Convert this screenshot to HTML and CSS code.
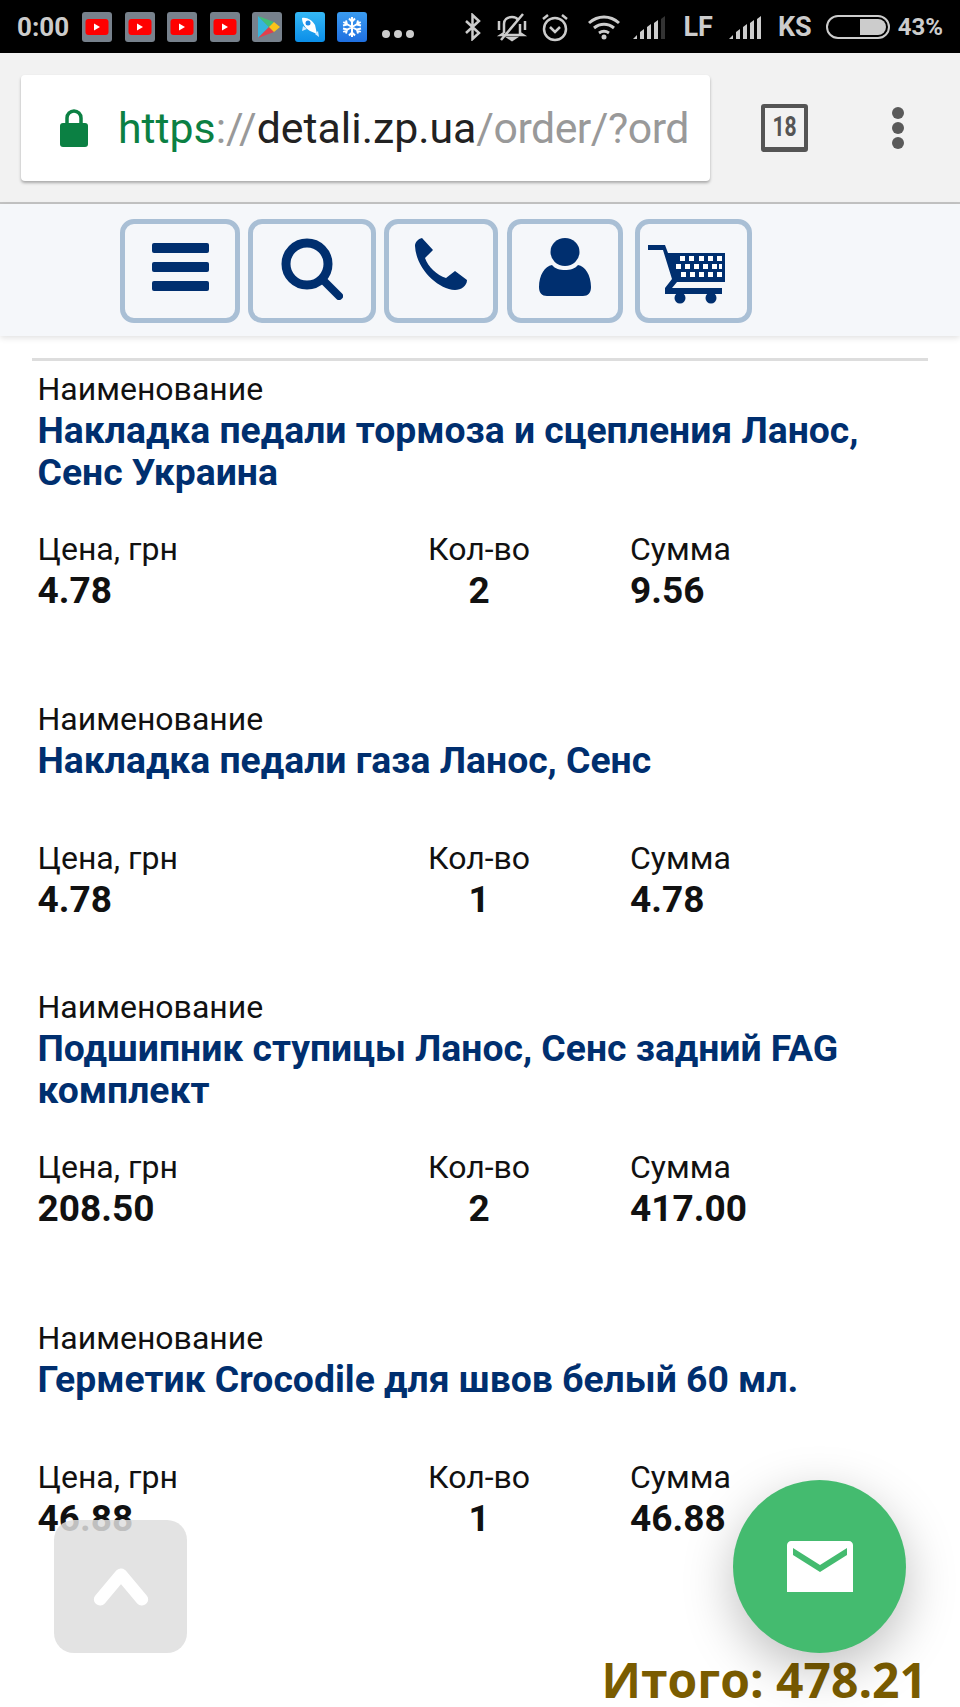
FILE: index.html
```html
<!DOCTYPE html>
<html lang="ru">
<head>
    <meta charset="UTF-8">
    <meta name="viewport" content="width=device-width, initial-scale=1.0">
    <title>detali.zp.ua</title>
    <link rel="stylesheet" href="styles.css">
</head>
<body>
    <!-- Android status bar -->
    <div class="status-bar">
        <div class="status-left">
            <span class="clock">0:00</span>
            <span class="tile"><svg viewBox="0 0 30 30" class="tile-svg"><rect x="3.500" y="7" width="23" height="16" rx="3" fill="#f00"/><path d="M12 11.500v7l6-3.500z" fill="#fff"/></svg></span>
            <span class="tile"><svg viewBox="0 0 30 30" class="tile-svg"><rect x="3.500" y="7" width="23" height="16" rx="3" fill="#f00"/><path d="M12 11.500v7l6-3.500z" fill="#fff"/></svg></span>
            <span class="tile"><svg viewBox="0 0 30 30" class="tile-svg"><rect x="3.500" y="7" width="23" height="16" rx="3" fill="#f00"/><path d="M12 11.500v7l6-3.500z" fill="#fff"/></svg></span>
            <span class="tile"><svg viewBox="0 0 30 30" class="tile-svg"><rect x="3.500" y="7" width="23" height="16" rx="3" fill="#f00"/><path d="M12 11.500v7l6-3.500z" fill="#fff"/></svg></span>
            <span class="tile"><svg viewBox="0 0 30 30" class="tile-svg"><path d="M6 4v22l11-11z" fill="#35b5dc"/><path d="M6 4l11 11 5-5z" fill="#3fc07a"/><path d="M6 26l11-11 5 5z" fill="#e2404c"/><path d="M17 15l5-5 6 5-6 5z" fill="#fcc419"/></svg></span>
            <span class="tile tile-rocket"><svg viewBox="0 0 30 30" class="tile-svg"><path d="M7 6c5-1 10 2 13 7l2 9-7-3C10 16 7 11 7 6z" fill="#fff"/><circle cx="13" cy="11" r="2.500" fill="#1e88e5"/><path d="M20 22l4 3-1-6zM8 14l-1 5 5-2z" fill="#cfeaff"/></svg></span>
            <span class="tile tile-snow"><svg viewBox="0 0 30 30" class="tile-svg" fill="none" stroke="#fff" stroke-width="2"><path d="M15 5v20M6.300 10l17.400 10M6.300 20l17.400-10M12 6.500l3 3 3-3M12 23.500l3-3 3 3M6 13.500l4 -1-1-4M24 16.500l-4 1 1 4M6 16.500l4 1-1 4M24 13.500l-4-1 1-4"/></svg></span>
            <span class="more-dots"><i></i><i></i><i></i></span>
        </div>
        <div class="status-right">
            <svg class="st-bt" viewBox="0 0 18 28" fill="none" stroke="#ccc" stroke-width="2.500"><path d="M2 8l13 12-6.500 6V2L15 8 2 20"/></svg>
            <svg class="st-bell" viewBox="0 0 32 30" fill="none" stroke="#ccc" stroke-width="2.500"><path d="M8 21v-9c0-4 3-7 8-7 3 0 5 1 6 3M24 12v9l3 2H5l3-2M13 26h6l-3 2zM3 9v9M29 9v9M5 28L27 2"/></svg>
            <svg class="st-alarm" viewBox="0 0 28 30" fill="none" stroke="#ccc" stroke-width="2.500"><circle cx="14" cy="17" r="11"/><path d="M9 15l5 5 5-5M2 7l5-4M26 7l-5-4"/></svg>
            <svg class="st-wifi" viewBox="0 0 34 26" fill="none" stroke="#ccc" stroke-width="3"><path d="M2 9c9-8 21-8 30 0M7 14c6-5 14-5 20 0M12 19c3-2 7-2 10 0"/><circle cx="17" cy="23" r="2.500" fill="#ccc" stroke="none"/></svg>
            <svg class="st-signal" viewBox="0 0 34 24"><path d="M0 24l4-4v4zM7 24v-7l4-3v10zM14 24V12l4-3v15zM21 24V8l4-3v19z" fill="#ccc"/><path d="M28 24V4l4-3v23z" fill="#333"/></svg>
            <span class="st-text st-lf">LF</span>
            <svg class="st-signal" viewBox="0 0 34 24"><path d="M0 24l4-4v4zM7 24v-7l4-3v10zM14 24V12l4-3v15zM21 24V8l4-3v19zM28 24V4l4-3v23z" fill="#ccc"/></svg>
            <span class="st-text st-ks">KS</span>
            <span class="battery"><span class="battery-fill"></span></span>
            <span class="st-pct">43%</span>
        </div>
    </div>

    <!-- Browser toolbar -->
    <div class="toolbar">
        <div class="url-box">
            <svg class="lock" viewBox="0 0 28 38"><path d="M7 16V9a7 7 0 0 1 14 0v7" fill="none" stroke="#0b8043" stroke-width="3.500"/><rect y="14" width="28" height="24" rx="3" fill="#0b8043"/></svg>
            <div class="url"><span class="url-https">https</span><span class="url-dim">://</span><span class="url-host">detali.zp.ua</span><span class="url-path">/order/?ord</span></div>
        </div>
        <div class="tab-count"><span class="tab-num">18</span></div>
        <div class="menu-dots"><i></i><i></i><i></i></div>
    </div>

    <!-- Site nav -->
    <div class="site-nav">
        <a class="nav-btn nav-menu"><span class="burger"><i></i><i></i><i></i></span></a>
        <a class="nav-btn nav-search">
            <svg viewBox="0 0 62 62" class="icon-search" fill="none" stroke="#002f6f"><circle cx="26" cy="26" r="21" stroke-width="9"/><path d="M42 42l16 16" stroke-width="8" stroke-linecap="round"/></svg>
        </a>
        <a class="nav-btn nav-phone">
            <svg viewBox="0 0 52 52" class="icon-phone"><path d="M7 0L18 12L10 20C13 29 22 37 31 40L40 33L52 42C52 48 46 52 40 52C22 51 1 30 0 8C0 4 3 1 7 0z" fill="#002f6f"/></svg>
        </a>
        <a class="nav-btn nav-user">
            <svg viewBox="0 0 52 58" class="icon-user"><ellipse cx="26" cy="14" rx="14.500" ry="14" fill="#002f6f"/><path d="M13 27c3 4 8 5 13 5s10-1 13-5c7 1 13 10 13 22 0 6-3 9-8 9H8c-5 0-8-3-8-9 0-12 6-21 13-22z" fill="#002f6f"/></svg>
        </a>
        <a class="nav-btn nav-cart">
            <svg viewBox="0 0 77 59" class="icon-cart"><path d="M0 0h17l3 8h57v29H29l-5 6h50v6H17v-6l7-9L15 5H0z" fill="#002f6f"/><circle cx="32" cy="53" r="5.500" fill="#002f6f"/><circle cx="63" cy="53" r="5.500" fill="#002f6f"/><path d="M32 11h5v5h-5zM41 11h5v5h-5zM51 11h5v5h-5zM60 11h5v5h-5zM69 11h5v5h-5zM28 19h5v5h-5zM37 19h5v5h-5zM46 19h5v5h-5zM55 19h5v5h-5zM64 19h5v5h-5zM71 19h3v5h-3zM33 27h5v5h-5zM42 27h5v5h-5zM51 27h5v5h-5zM60 27h5v5h-5zM69 27h5v5h-5z" fill="#fff"/></svg>
        </a>
    </div>

    <div class="content">
        <div class="item item-long">
            <div class="cap">Наименование</div>
            <div class="name">Накладка педали тормоза и сцепления Ланос, Сенс Украина</div>
            <div class="nums">
                <div><div class="cap">Цена, грн</div><div class="val">4.78</div></div>
                <div class="qty"><div class="cap">Кол-во</div><div class="val">2</div></div>
                <div><div class="cap">Сумма</div><div class="val">9.56</div></div>
            </div>
        </div>
        <div class="item item-short">
            <div class="cap">Наименование</div>
            <div class="name">Накладка педали газа Ланос, Сенс</div>
            <div class="nums">
                <div><div class="cap">Цена, грн</div><div class="val">4.78</div></div>
                <div class="qty"><div class="cap">Кол-во</div><div class="val">1</div></div>
                <div><div class="cap">Сумма</div><div class="val">4.78</div></div>
            </div>
        </div>
        <div class="item item-long item-third">
            <div class="cap">Наименование</div>
            <div class="name">Подшипник ступицы Ланос, Сенс задний FAG комплект</div>
            <div class="nums">
                <div><div class="cap">Цена, грн</div><div class="val">208.50</div></div>
                <div class="qty"><div class="cap">Кол-во</div><div class="val">2</div></div>
                <div><div class="cap">Сумма</div><div class="val">417.00</div></div>
            </div>
        </div>
        <div class="item item-short">
            <div class="cap">Наименование</div>
            <div class="name">Герметик Crocodile для швов белый 60 мл.</div>
            <div class="nums">
                <div><div class="cap">Цена, грн</div><div class="val">46.88</div></div>
                <div class="qty"><div class="cap">Кол-во</div><div class="val">1</div></div>
                <div><div class="cap">Сумма</div><div class="val">46.88</div></div>
            </div>
        </div>
        <div class="total">Итого: 478.21</div>
    </div>

    <a class="to-top">
        <svg viewBox="0 0 60 42" class="icon-up" fill="none" stroke="#fff" stroke-width="13" stroke-linecap="round" stroke-linejoin="round"><path d="M8 34L30 8l22 26"/></svg>
    </a>
    <a class="mail-fab">
        <svg viewBox="0 0 66 51" class="icon-mail"><path d="M4 0h58c2 0 4 2 4 4v47H0V4c0-2 2-4 4-4z" fill="#fff"/><path d="M6 7l27 17L60 7v7L33 31 6 14z" fill="#44bb6f"/></svg>
    </a>
</body>
</html>
```

FILE: styles.css
```css
html, body {
    margin: 0;
    padding: 0;
    height: 1707px;
    overflow: hidden;
}
body {
    position: relative;
    font-family: Roboto, sans-serif;
    background-color: #fff;
    color: #111;
}

/* status bar */
.status-bar {
    height: 53px;
    background-color: #000;
    display: flex;
    justify-content: space-between;
    align-items: center;
    padding: 0 17px;
}
.status-left, .status-right {
    display: flex;
    align-items: center;
}
.clock {
    width: 65px;
    font-size: 26px;
    font-weight: 700;
    color: #ccc;
}
.tile {
    width: 30px;
    height: 30px;
    margin-right: 12.500px;
    border-radius: 3px;
    background-color: #77818c;
}
.tile-rocket {
    background: linear-gradient(#35b8f5, #0b8ee8);
}
.tile-snow {
    background: linear-gradient(#3a9bf0, #1f6fe0);
}
.tile-svg {
    display: block;
    width: 30px;
    height: 30px;
}
.more-dots {
    display: flex;
    gap: 4px;
    margin: 14px 0 0 2px;
}
.more-dots i {
    width: 8px;
    height: 8px;
    border-radius: 50%;
    background-color: #ccc;
}
.st-bt { width: 18px; height: 28px; margin-right: 14px; }
.st-bell { width: 32px; height: 30px; margin-right: 13px; }
.st-alarm { width: 28px; height: 30px; margin-right: 18px; }
.st-wifi { width: 34px; height: 26px; margin-right: 12px; }
.st-signal { width: 34px; height: 24px; }
.st-text {
    font-size: 27px;
    font-weight: 700;
    color: #ccc;
}
.st-pct {
    font-size: 24px;
    font-weight: 700;
    color: #ccc;
}
.st-lf { margin: 0 16px 0 16px; }
.st-ks { margin: 0 14px 0 15px; }
.battery {
    box-sizing: border-box;
    width: 64px;
    height: 24px;
    border: 2px solid #ccc;
    border-radius: 12px;
    padding: 2px;
    display: flex;
    justify-content: flex-end;
    margin-right: 8px;
}
.battery-fill {
    width: 26px;
    background-color: #ccc;
    border-radius: 0 9px 9px 0;
}

/* browser toolbar */
.toolbar {
    box-sizing: border-box;
    height: 151px;
    padding: 22px 0 0 21px;
    background-color: #f2f2f2;
    border-bottom: 2px solid #c4c4c4;
    display: flex;
    align-items: flex-start;
}
.url-box {
    box-sizing: border-box;
    width: 689px;
    height: 106px;
    background-color: #fff;
    border-radius: 4px;
    box-shadow: 0 2px 3px rgba(0, 0, 0, 0.3);
    display: flex;
    align-items: center;
    padding: 0 20px 0 39px;
}
.lock {
    width: 28px;
    height: 38px;
    flex-shrink: 0;
    margin-right: 30px;
}
.url {
    min-width: 0;
    font-size: 42.800px;
    white-space: nowrap;
    font-weight: 400;
    color: #999;
}
.url-https { color: #0b8043; }
.url-host { color: #222; }
.url-path { letter-spacing: -0.500px; }
.tab-count {
    box-sizing: border-box;
    width: 47px;
    height: 48px;
    margin: 29px 0 0 51px;
    border: 4px solid #555;
    border-radius: 3px;
    border-bottom-width: 5px;
    text-align: center;
    line-height: 38px;
}
.tab-num {
    display: inline-block;
    transform: scaleX(0.78);
    font-size: 27px;
    font-weight: 700;
    color: #555;
}
.menu-dots {
    display: flex;
    flex-direction: column;
    gap: 3px;
    margin: 32px 0 0 84px;
}
.menu-dots i {
    width: 12px;
    height: 12px;
    border-radius: 50%;
    background-color: #5a5a5a;
}

/* site nav */
.site-nav {
    box-sizing: border-box;
    height: 132px;
    padding: 15px 0 0 120px;
    background-color: #f5f7fa;
    box-shadow: 0 2px 6px rgba(0, 0, 0, 0.12);
    display: flex;
    gap: 8px;
}
.nav-btn {
    box-sizing: border-box;
    height: 104px;
    border: 5px solid #a9bfd5;
    border-radius: 14px;
    display: flex;
    align-items: center;
    justify-content: center;
}
.nav-menu { width: 120px; }
.nav-search { width: 128px; }
.nav-phone { width: 114px; }
.nav-user { width: 116px; margin-left: 1px; }
.nav-cart { width: 117px; margin-left: 4px; }
.burger {
    display: flex;
    flex-direction: column;
    gap: 9px;
    margin-bottom: 8px;
}
.burger i {
    width: 57px;
    height: 10px;
    border-radius: 2px;
    background-color: #002f6f;
}
.icon-search { width: 62px; height: 62px; margin-bottom: 4px; }
.icon-phone { width: 52px; height: 52px; margin-bottom: 14px; }
.icon-user { width: 52px; height: 58px; margin-bottom: 9px; }
.icon-cart { width: 77px; height: 59px; margin: 6px 15px 0 0; }

/* order list */
.content {
    margin: 22px 32px 0;
    padding: 8px 6px 0 5.500px;
    border-top: 3px solid #ddd;
}
.cap {
    font-size: 32px;
    line-height: 40px;
    font-weight: 400;
    color: #111;
}
.name {
    font-size: 37.300px;
    line-height: 42px;
    font-weight: 700;
    color: #002f6f;
}
.nums {
    display: grid;
    grid-template-columns: 390.500px 202px 1fr;
}
.qty {
    width: fit-content;
    text-align: center;
}
.val {
    font-size: 37px;
    line-height: 40px;
    font-weight: 700;
    color: #111;
    margin-top: 2px;
}
.item-long { margin-bottom: 88px; }
.item-long .nums { margin-top: 36px; }
.item-short { margin-bottom: 67px; }
.item-short .nums { margin-top: 57px; }
.item-third { margin-bottom: 89px; }
.total {
    margin: 116px -5px 0 0;
    font-family: "Open Sans", sans-serif;
    font-size: 48px;
    line-height: 50px;
    font-weight: 700;
    color: #7a5c00;
    text-align: right;
    white-space: nowrap;
}

/* floating buttons */
.to-top {
    position: absolute;
    left: 54px;
    top: 1520px;
    width: 133px;
    height: 133px;
    border-radius: 20px;
    background-color: rgba(222, 222, 222, 0.85);
    display: flex;
    align-items: center;
    justify-content: center;
}
.icon-up { width: 58px; height: 40px; }
.mail-fab {
    position: absolute;
    left: 733px;
    top: 1480px;
    width: 173px;
    height: 173px;
    border-radius: 50%;
    background-color: #44bb6f;
    box-shadow: 0 16px 50px rgba(0, 0, 0, 0.25);
    display: flex;
    align-items: center;
    justify-content: center;
}
.icon-mail { width: 66px; height: 51px; }
```
